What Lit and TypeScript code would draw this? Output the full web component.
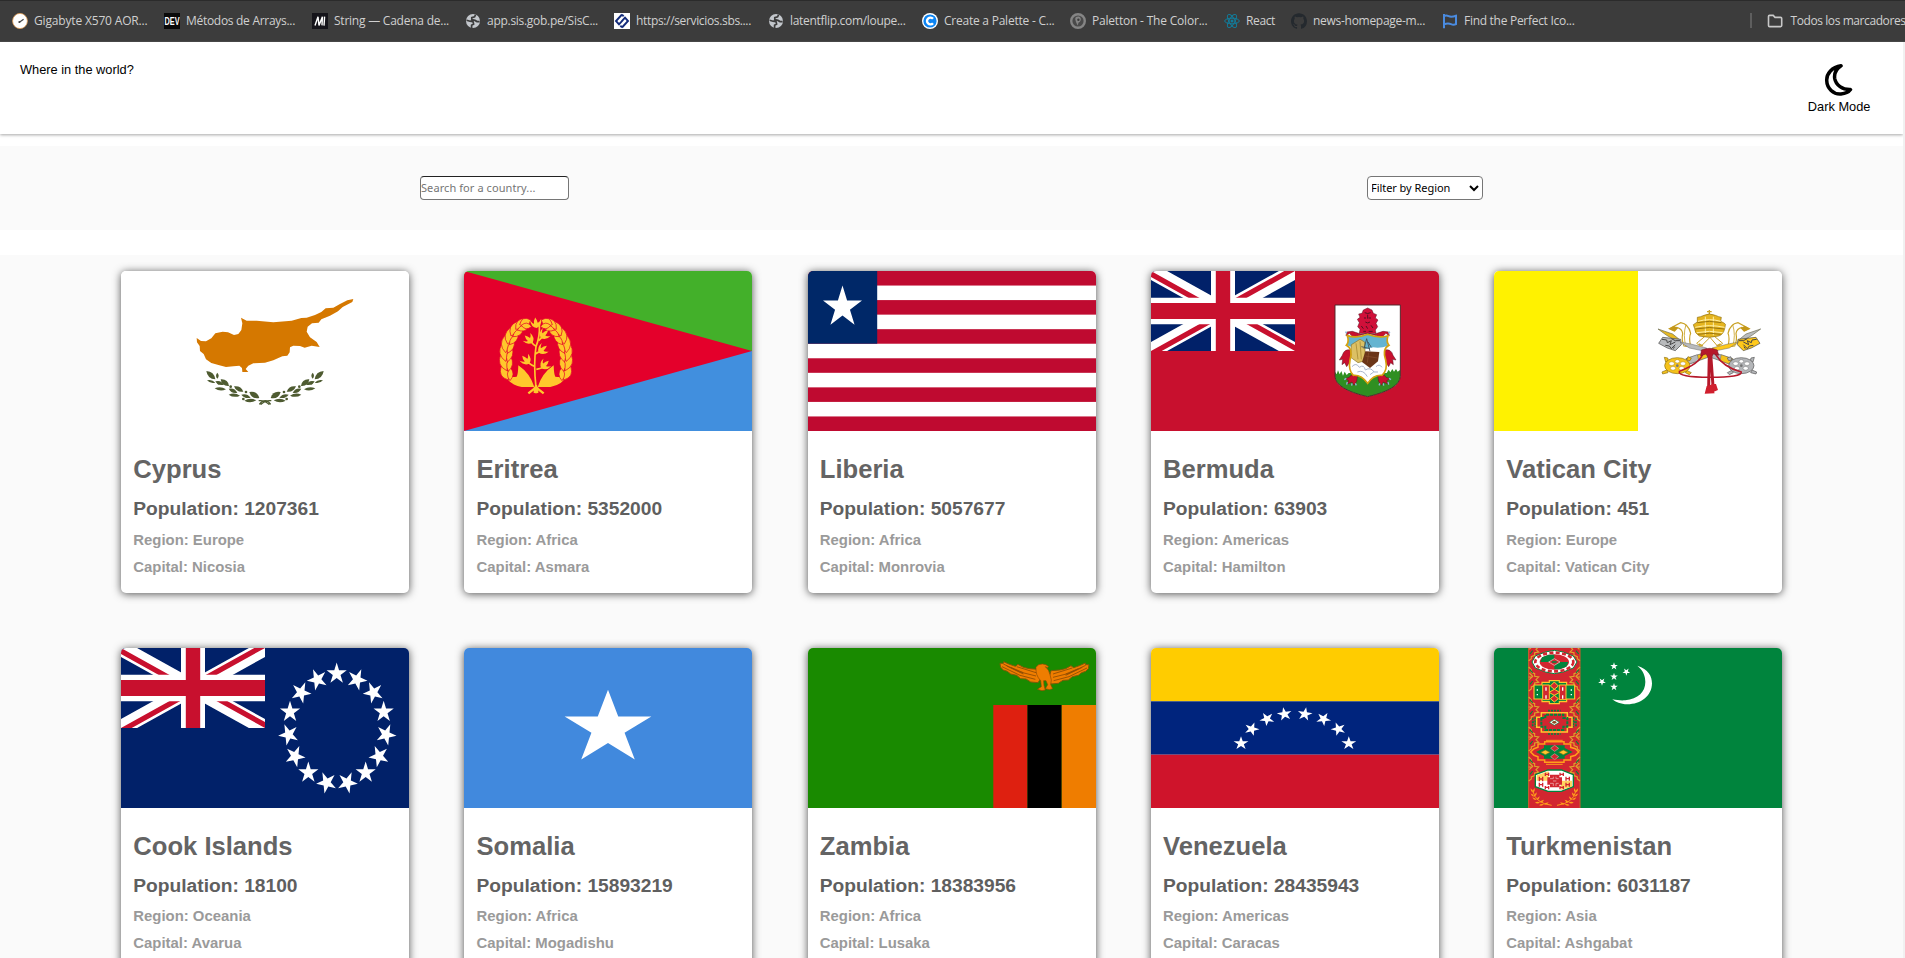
import { LitElement, html, svg, css } from "lit";
import { customElement, property } from "lit/decorators.js";

const star = (cx: number, cy: number, rx: number, ry: number, rot = 0, fill = "#fff") => {
  const pts: string[] = [];
  for (let i = 0; i < 10; i++) {
    const r = i % 2 ? 0.382 : 1;
    const a = ((i * 36 + rot - 90) * Math.PI) / 180;
    pts.push(`${(cx + rx * r * Math.cos(a)).toFixed(2)},${(cy + ry * r * Math.sin(a)).toFixed(2)}`);
  }
  return svg`<polygon points=${pts.join(" ")} fill=${fill} />`;
};

const leaf = (x: number, y: number, len: number, w: number, rot: number, fill: string) =>
  svg`<path d="M0 0Q${len * 0.5} ${-w} ${len} 0Q${len * 0.5} ${w} 0 0Z" transform="translate(${x} ${y}) rotate(${rot})" fill=${fill} />`;

const union = () => svg`
  <svg x="0" y="0" width="144" height="80" viewBox="0 0 60 30" preserveAspectRatio="none">
    <clipPath id="uj"><path d="M30 15h30v15zv15H0zH0V0zV0h30z" /></clipPath>
    <rect width="60" height="30" fill="#012169" />
    <path d="M0 0L60 30M60 0L0 30" stroke="#fff" stroke-width="6" />
    <path d="M0 0L60 30M60 0L0 30" clip-path="url(#uj)" stroke="#C8102E" stroke-width="4" />
    <path d="M30 0v30M0 15h60" stroke="#fff" stroke-width="10" />
    <path d="M30 0v30M0 15h60" stroke="#C8102E" stroke-width="6" />
  </svg>`;

const cyprusLeaves = [
  [346, 388, -27, -25, 15], [346, 398, -25, -7, 8], [352, 386, 0, -18, 8], [387, 408, -25, -20, 15],
  [372, 404, -26, -10, 11], [378, 418, -34, -3, 10], [430, 425, -28, -16, 13], [412, 428, -26, -12, 11],
  [420, 437, -34, -3, 10], [478, 444, -30, -18, 16], [452, 443, -28, -9, 10], [469, 451, -36, 1, 10],
];

const cyprus = () => svg`
  <rect width="288" height="160" fill="#fff" />
  <g transform="scale(.33333) translate(-63 -63)">
    <path fill="#D57800" d="M760 147L742 151L720 162L700 173L677 175L664 186L645 195L620 203L604 204L575 212L520 217L470 212L440 212L423 203L427 220L424 240L415 252L402 255L384 247L368 245L346 250L334 265L318 274L303 273L290 264L291 277L299 288L300 303L311 312L318 328L334 339L358 346L378 351L400 349L418 347L426 354L427 366L445 366L437 357L445 347L460 340L495 338L520 331L547 319L562 317L569 307L570 292L580 287L600 288L614 293L635 287L659 291L650 276L630 262L620 245L623 230L636 220L656 218L664 208L690 197L714 184L728 171L757 156Z" />
    ${cyprusLeaves.map(([x, y, dx, dy, w]) => {
      const len = Math.hypot(dx, dy);
      const a = (Math.atan2(dy, dx) * 180) / Math.PI;
      return svg`${leaf(x, y, len, w, a, "#4E5B31")}${leaf(990 - x, y, len, w, 180 - a, "#4E5B31")}`;
    })}
    <path d="M478 463Q486 452 496 452Q504 452 512 463M476 452Q495 450 508 464M514 452Q495 450 482 464" fill="none" stroke="#4E5B31" stroke-width="4" />
    ${[[392, 410], [438, 426], [356, 400], [430, 447]].map(([x, y]) => svg`<circle cx=${x} cy=${y} r="4" fill="#4E5B31" /><circle cx=${990 - x} cy=${y} r="4" fill="#4E5B31" />`)}
  </g>`;

const eritreaSide = () => svg`
  <path d="M253 411Q240 370 205 346Q204 375 200 380Q180 384 163 374Q178 404 215 411Z" />
  ${[[182, 378, -120, 46], [177, 350, -112, 52], [174, 322, -104, 54], [174, 296, -94, 52], [180, 270, -82, 50], [190, 246, -68, 48], [204, 226, -50, 44], [216, 212, -25, 36]].map(
    ([x, y, r, l]) => svg`<g stroke="#E4002B" stroke-width="2">${leaf(x - 7, y + 12, l, 24, r + 2, "#FFC72C")}${leaf(x - 2, y + 14, l * 0.85, 17, r + 32, "#FFC72C")}</g>`
  )}`;
const bud = (x: number, y: number, r: number) =>
  svg`<path d="M0 0Q-17 -6 -16 -26Q-10 -14 -6 -14Q-6 -24 0 -32Q5 -24 5 -15Q10 -15 17 -25Q17 -5 0 0Z" transform="translate(${x} ${y}) rotate(${r})" />`;

const eritrea = () => svg`
  <rect width="288" height="80" fill="#43B02A" />
  <rect y="80" width="288" height="80" fill="#418FDE" />
  <path d="M0 0L288 80L0 160Z" fill="#E4002B" />
  <g transform="scale(.33333) translate(-42 -63)" fill="#FFC72C">
    ${eritreaSide()}
    <g transform="translate(516 0) scale(-1 1)">${eritreaSide()}</g>
    <path d="M258 412Q250 340 258 290Q270 260 268 225M256 350Q244 346 235 338M259 358Q270 356 280 352M256 312Q264 306 272 305M260 290Q250 285 244 276M266 272Q272 266 278 260" fill="none" stroke="#FFC72C" stroke-width="5" />
    ${bud(238, 341, -42)}${bud(274, 355, 44)}${bud(266, 308, 50)}${bud(248, 278, -48)}${bud(272, 264, 44)}${bud(260, 234, -8)}
    <path d="M235 430L262 409M281 430L254 409M258 405V430" stroke="#FFC72C" stroke-width="7" />
    <path d="M251 412h14v17h-14z" />
  </g>`;

const liberia = () => svg`
  <rect width="288" height="160" fill="#fff" />
  ${[0, 2, 4, 6, 8, 10].map((i) => svg`<rect y=${(i * 160) / 11} width="288" height=${160 / 11} fill="#BF0A30" />`)}
  <rect width="69.2" height="72.7" fill="#002868" />
  ${star(34.5, 36.3, 20.5, 21.7)}`;

const bermudaHalf = () => svg`
  <path d="M683 250L640 262L628 250L618 258L620 246L637 244L662 252Z" fill="#C8102E" stroke="#5a1020" stroke-width="1.5" />
  <path d="M632 300Q612 296 607 316L598 330L608 328L606 344L614 338L620 350L632 332Z" fill="#C8102E" stroke="#5a1020" stroke-width="1.5" />
  <path d="M653 374Q634 370 628 382L616 386L626 392L622 402L636 396L642 406L650 394Z" fill="#C8102E" stroke="#5a1020" stroke-width="1.5" />
  <path d="M622 396l-2 8M636 400l-1 7M646 400l3 6M619 385l-6 4M621 250l-5 -5" stroke="#8fb7d8" stroke-width="4" />`;

const bermuda = () => svg`
  <rect width="288" height="160" fill="#C8102E" />
  ${union()}
  <g transform="scale(.33333) translate(-33 -63)">
    <path d="M585 165H781V380Q778 418 683 440Q588 418 585 380Z" fill="#fff" />
    <path d="M585 365l5 8 4-12 5 12 5-10 5 14 5-12 6 10 6-6H740l6-10 5 8 6-10 5 8 6-8 5 8 8-6V380Q778 418 683 440Q588 418 585 380Z" fill="#2F8F22" />
    <path d="M585 165H781V380Q778 418 683 440Q588 418 585 380Z" fill="none" stroke="#53282c" stroke-width="3" />
    <path d="M683 174L696 180L700 190L710 194L706 204L714 210L708 220L713 230L706 240L708 250H658L660 238L653 230L658 218L652 208L660 202L656 192L666 190L670 180Z" fill="#D0103A" stroke="#5a1020" stroke-width="1.5" />
    <path d="M674 188q9 5 18 0M672 204h6m8 0h7M676 216q7 6 14 0M664 228l6 8m8 -8l5 8m10 -10l6 8M670 244h8m8 0h12M683 194v12" stroke="#521020" stroke-width="3" fill="none" />
    ${bermudaHalf()}
    <g transform="translate(1366 0) scale(-1 1)">${bermudaHalf()}</g>
    <path d="M622 257Q650 266 683 253Q718 266 744 257Q738 276 747 286Q726 296 737 330Q744 360 726 376Q700 374 683 400Q664 374 640 376Q624 360 630 330Q640 296 619 286Q628 276 622 257Z" fill="#fff" />
    <path d="M622 257Q650 266 683 253Q718 266 744 257Q738 276 745 287Q720 296 700 292L664 300L634 290L619 286Q628 276 622 257Z" fill="#64B4D1" />
    <path d="M634 284L660 268L674 276L676 332L654 338L632 322Z" fill="#DCC064" stroke="#8b7427" stroke-width="2" />
    <path d="M648 280l6 48M660 274l4 54" stroke="#a88a34" stroke-width="2.5" />
    <path d="M672 296l8 -30l10 38M664 290l26 6M684 276l10 16" stroke="#3c4a55" stroke-width="2.5" fill="none" />
    <path d="M676 304L718 306L714 334L690 354L666 336Z" fill="#6B3518" />
    <path d="M676 318l36 6M686 308l-4 30" stroke="#8a5230" stroke-width="2" />
    <path d="M636 350q12 -14 22 2q14 -10 18 8q16 -10 26 6M652 366q18 -8 30 14M690 374q10 -12 24 -8M708 350q10 -10 18 2" fill="none" stroke="#a9b5cc" stroke-width="3" />
    <path d="M622 257Q650 266 683 253Q718 266 744 257Q738 276 747 286Q726 296 737 330Q744 360 726 376Q700 374 683 400Q664 374 640 376Q624 360 630 330Q640 296 619 286Q628 276 622 257Z" fill="none" stroke="#D5A10E" stroke-width="5" />
  </g>`;

const vatSide = (a: string, b: string) => svg`
  <path d="M534 237L578 252L600 270L590 274L560 256Z" fill=${b} stroke="#6b6b50" stroke-width="2" />
  <path d="M568 236L602 218Q626 222 632 250Q626 262 632 290L612 288Q604 270 608 250Q606 236 590 232L582 242Z" fill="#fff" stroke="#C9A227" stroke-width="3.5" />
  <path d="M566 236l16 -9l12 8l-10 10z" fill="#C4981A" />
  <path d="M618 224Q608 255 618 290" stroke="#C9A227" stroke-width="2.5" fill="none" />
  <path d="M548 262L602 268L604 284L586 302L562 294L536 280Z" fill=${a} stroke="#444" stroke-width="2" />
  <path d="M546 268l14 2l2 8l12 -6l-4 12l16 -8M556 286l12 2l6 8l12 -12M574 266l12 6l14 0M584 290l-4 6" stroke="#444" stroke-width="3" fill="none" />
  <path d="M600 276L632 282L680 294L676 304L628 294Z" fill=${a} stroke="#666" stroke-width="1.5" />`;
const vatBow = (a: string, b: string, edge: string) => svg`
  <path d="M680 306L618 326L628 342L684 322Z" fill=${a} stroke="#555" stroke-width="2" />
  <path d="M652 314L618 326L628 342L656 332Z" fill=${b} stroke="#666" stroke-width="1.5" />
  <g stroke=${edge} stroke-width="2" fill=${a}>
    <path d="M553 322l10 2l2 8l-8 4zM546 366l14 -6l4 8l-16 4zM624 320l10 4l-4 8l-10 -2zM622 362l12 6l-6 6l-12 -6z" />
    <ellipse cx="592" cy="347" rx="38" ry="24" />
  </g>
  <g fill="#fff" stroke=${edge} stroke-width="1">
    <ellipse cx="575" cy="341" rx="8" ry="5.5" /><ellipse cx="592" cy="334" rx="7" ry="5" /><ellipse cx="609" cy="341" rx="8" ry="5.5" />
    <ellipse cx="579" cy="355" rx="8" ry="5.5" /><ellipse cx="605" cy="355" rx="8" ry="5.5" />
  </g>
  <circle cx="592" cy="347" r="4" fill="#777" />`;

const vatican = () => svg`
  <rect width="288" height="160" fill="#fff" />
  <rect width="144" height="160" fill="#FFF200" />
  <g transform="scale(.33333) translate(-42 -63)">
    ${vatSide("#B9BBBD", "#E6B822")}
    <g transform="translate(1376 0) scale(-1 1)">${vatSide("#FFC91A", "#B9BBBD")}</g>
    <path d="M676 258L650 280L662 290L690 262L714 290L728 280L702 258Z" fill="#fff" stroke="#C9A227" stroke-width="3" />
    <path d="M656 282l12 6M722 282l-12 6" stroke="#C9A227" stroke-width="5" />
    ${vatBow("#F5C21B", "#B9BBBD", "#8a6d10")}
    <g transform="translate(1376 0) scale(-1 1)">${vatBow("#B4B6B9", "#F5C21B", "#555")}</g>
    <path d="M688 180v14M681 185h14" stroke="#C9A227" stroke-width="4" />
    <path d="M652 202L662 200L672 196Q688 188 706 196L716 200L724 202L722 214Q740 222 736 226L734 236Q730 254 716 258Q688 266 658 258Q644 250 644 236L640 224L652 216Z" fill="#E5B520" stroke="#8f6f10" stroke-width="2" />
    <path d="M654 214Q688 204 722 214M646 232Q688 222 734 232M650 248Q688 240 728 248M676 200v56M700 200v56" fill="none" stroke="#fff0a8" stroke-width="3" />
    <path d="M652 218Q688 210 724 218M646 237Q688 228 732 237M654 253Q688 246 722 253" fill="none" stroke="#97720c" stroke-width="3" />
    <path d="M668 312Q660 340 598 364Q592 382 690 382Q786 382 784 366Q730 352 706 312" fill="none" stroke="#B5182A" stroke-width="4.5" />
    <path d="M664 300Q690 290 712 300L716 316L700 312L694 322L684 322L678 312L662 318Z" fill="#B5182A" stroke="#6d1020" stroke-width="1.5" />
    <path d="M688 310L686 412M692 312L699 408" stroke="#B5182A" stroke-width="9" />
    <path d="M694 402L708 402L714 420L700 426ZM680 408L694 404L704 430L674 431Z" fill="#D01F2E" />
  </g>`;

const cookStars = [[710, 128], [771, 146], [820, 185], [851, 243], [858, 311], [837, 376], [797, 425], [742, 455], [680, 455], [625, 425], [585, 376], [566, 311], [570, 243], [603, 185], [652, 146]];
const cook = () => svg`
  <rect width="288" height="160" fill="#012169" />
  ${union()}
  ${cookStars.map(([x, y], i) => star((x - 63) / 3, (y - 53) / 3 + 0.6, 10.6, 11.2, i * 24))}`;

const somalia = () => svg`
  <rect width="288" height="160" fill="#4189DD" />
  ${star(144, 80.3, 45.6, 38.5)}`;

const zambiaWing = () => svg`
  <path d="M744 118L718 116L700 112L684 103L676 109L656 102L641 95L640 100L630 100L632 112L640 120L652 124L662 132L680 136L692 146L708 147L722 156L744 158L752 146Z" fill="#EF7D00" stroke="#7d5a08" stroke-width="3" />
  <path d="M640 102L690 126L738 138M636 110L690 136L736 148M680 110L738 128M662 112L700 128M650 108L700 132" fill="none" stroke="#8a4a04" stroke-width="2.5" />`;
const zambia = () => svg`
  <rect width="288" height="160" fill="#198A00" />
  <rect x="185.3" y="57" width="34.2" height="103" fill="#DE2010" />
  <rect x="219.5" y="57" width="34.2" height="103" fill="#000" />
  <rect x="253.7" y="57" width="34.3" height="103" fill="#EF7D00" />
  <g transform="scale(.33333) translate(-54 -54)">
    ${zambiaWing()}
    <g transform="translate(1527 4) scale(-1 1)">${zambiaWing()}</g>
    <path d="M738 112Q744 101 758 102L768 104L776 110L772 113L766 110Q778 120 780 134L784 150L782 164L788 176L778 179L766 176L773 164L768 152L761 152L762 166L766 180L756 182L742 178L754 170L752 152Q736 136 738 112Z" fill="#EF7D00" stroke="#8a4a04" stroke-width="2" />
  </g>`;

const venezuela = () => svg`
  <rect width="288" height="53.3" fill="#FFCC00" />
  <rect y="53.3" width="288" height="53.4" fill="#00247D" />
  <rect y="106.7" width="288" height="53.3" fill="#CF142B" />
  ${[[90, 95.3], [100.7, 81], [116, 71], [133.5, 66.2], [153.8, 66.2], [172.5, 71], [187.4, 81], [197.8, 95.3]].map(([x, y], i) => star(x, y, 7.8, 7, -72 + i * 20.57))}`;

const turkmenistan = () => svg`
  <rect width="288" height="160" fill="#00843D" />
  <g transform="scale(.33333) translate(-42 -54)">
    <rect x="144" y="54" width="157" height="480" fill="#D22630" />
    <path d="M146 54v480M300 54v480" stroke="#b8862c" stroke-width="2" />
    ${[50, 141, 231, 321, 411].map((y) => [0, 1].map((f) => svg`
      <g transform=${f ? "translate(446 0) scale(-1 1)" : ""} fill="none" stroke="#DDA52B" stroke-width="3.5">
        <path d="M146 ${y - 30}l8 8v8l10 4v8l12 2l-8 8l8 8l-12 2v8l-10 4v6l-8 6M148 ${y - 12}l10 10l-10 10M146 ${y}h12" />
        <path d="M150 ${y - 22}l8 10M150 ${y + 22}l8 -10" stroke="#00843D" />
      </g>`))}
    <path d="M156 96L166 78L196 66L223 61L250 66L280 78L291 96L280 114L250 126L223 131L196 126L166 114Z" fill="#fff" stroke="#00843D" stroke-width="3" />
    <ellipse cx="223" cy="96" rx="57" ry="28" fill="none" stroke="#D22630" stroke-width="8" stroke-dasharray="12 7" />
    <ellipse cx="223" cy="96" rx="44" ry="23" fill="#D22630" />
    <path d="M186 82l20 -8h17v22h-42zM223 96h42l-6 14l-20 8h-16z" fill="#00843D" />
    <path d="M206 96l17 -10l17 10l-17 10z" fill="#D22630" stroke="#f3d3d3" stroke-width="2" />
    <path d="M216 96h14" stroke="#00843D" stroke-width="4" />

    <path d="M162 165h24v-8h22v-5h30v5h22v8h24v42h-24v8h-22v6h-30v-6h-22v-8h-24z" fill="#00843D" stroke="#FFC72C" stroke-width="3.5" />
    <path d="M188 165h20v44h-20zM238 165h20v44h-20z" fill="#D22630" stroke="#FFC72C" stroke-width="3" />
    <path d="M198 172v10M248 172v10M198 196v10M248 196v10M172 178v4M274 178v4M172 192v4M274 192v4" stroke="#fff" stroke-width="4" />
    <path d="M223 156l12 12l-12 10l-12 -10zM223 196l12 10l-12 10l-12 -10zM207 187l16 -9l16 9l-16 9z" fill="#D22630" stroke="#FFC72C" stroke-width="3" />

    <path d="M158 265v26M166 262v30M280 262v30M288 265v26M204 242h38M204 312h38M156 276h18M272 276h18" stroke="#00843D" stroke-width="5" stroke-dasharray="6 3" />
    <path d="M170 262h14v-14h78v14h14v30h-14v14h-78v-14h-14z" fill="#D22630" stroke="#FFC72C" stroke-width="4.5" />
    <path d="M184 264h12v-10h54v10h12v26h-12v10h-54v-10h-12z" fill="none" stroke="#00843D" stroke-width="6" stroke-dasharray="9 3" />
    <path d="M208 277l15 -9l15 9l-15 9z" fill="#fff" stroke="#00843D" stroke-width="2" />
    <ellipse cx="223" cy="277" rx="6" ry="4" fill="#8c4a1c" />

    <path d="M152 366l10 -10l12 -4v-10h20v-7h58v7h20v10l14 4l10 10l-10 10l-14 4v10h-20v7h-58v-7h-20v-10l-12 -4z" fill="#D22630" stroke="#FF9E1B" stroke-width="4.5" />
    <path d="M168 366l24 -12v-8h62v8l24 12l-24 12v8h-62v-8z" fill="#00843D" />
    <path d="M212 355l12 -9l12 9l-12 9zM212 380l12 -9l12 9l-12 9z" fill="#D22630" stroke="#d99" stroke-width="2" />
    <path d="M182 367l14 -7l14 7l-14 7zM236 367l14 -7l14 7l-14 7z" fill="#FFC72C" stroke="#7d6a1a" stroke-width="2" />
    <path d="M198 331h50M198 403h50" stroke="#FF9E1B" stroke-width="3" />

    <path d="M166 434L204 420H244L280 434V470L244 484H204L166 470Z" fill="#fff" stroke="#00843D" stroke-width="4" />
    <path d="M170 436l36 -12v28h-36zM242 452h34v18l-34 10z" fill="#FFC72C" opacity=".75" />
    <path d="M178 440v14M188 440v14M178 447h10M178 458v12M188 458v12M178 464h10M258 440v12M268 440v12M258 446h10M258 458v12M268 458v12M258 464h10M196 428v10M206 428v10M196 433h10M240 428v10M250 428v10M240 433h10M196 468v10M206 468v10M196 472h10M240 468v10M250 468v10M240 472h10" stroke="#D22630" stroke-width="4" />
    <path d="M202 442h8v-8h28v8h8v22h-8v8h-28v-8h-8z" fill="#D22630" />
    <path d="M210 446h10v-6M236 446h-8v-6M210 460h10v8M236 460h-8v8M219 453h10" stroke="#f0c8c8" stroke-width="2" fill="none" />
    ${[0, 1].map((f) => svg`<g transform=${f ? "translate(446 0) scale(-1 1)" : ""}>
      <path d="M158 482Q166 520 215 526" fill="none" stroke="#FF9E1B" stroke-width="3" />
      ${[[159, 488, -70], [163, 500, -60], [170, 510, -50], [180, 518, -35], [192, 523, -20], [159, 488, -120], [163, 500, -140], [170, 510, -150], [180, 518, 180], [192, 523, 170]].map(([x, y, r]) => leaf(x, y, 15, 5, r, "#FF9E1B"))}
    </g>`)}
    <path d="M472 107C505 118 516 138 516 160C516 198 482 223 442 223C422 223 407 216 397 208C412 211 424 212 436 211C474 207 496 186 496 156C496 136 488 120 472 107Z" fill="#fff" />
    ${star(402, 109, 12, 12, 0)}${star(439, 125, 12, 12, 36)}${star(402, 140, 12, 12, 0)}${star(366, 155, 12, 12, 36)}${star(402, 171, 12, 12, 0)}
  </g>`;

type Country = { name: string; population: number; region: string; capital: string; flag: () => unknown };
const countries: Country[] = [
  { name: "Cyprus", population: 1207361, region: "Europe", capital: "Nicosia", flag: cyprus },
  { name: "Eritrea", population: 5352000, region: "Africa", capital: "Asmara", flag: eritrea },
  { name: "Liberia", population: 5057677, region: "Africa", capital: "Monrovia", flag: liberia },
  { name: "Bermuda", population: 63903, region: "Americas", capital: "Hamilton", flag: bermuda },
  { name: "Vatican City", population: 451, region: "Europe", capital: "Vatican City", flag: vatican },
  { name: "Cook Islands", population: 18100, region: "Oceania", capital: "Avarua", flag: cook },
  { name: "Somalia", population: 15893219, region: "Africa", capital: "Mogadishu", flag: somalia },
  { name: "Zambia", population: 18383956, region: "Africa", capital: "Lusaka", flag: zambia },
  { name: "Venezuela", population: 28435943, region: "Americas", capital: "Caracas", flag: venezuela },
  { name: "Turkmenistan", population: 6031187, region: "Asia", capital: "Ashgabat", flag: turkmenistan },
];

@customElement("country-card")
class CountryCard extends LitElement {
  @property({ attribute: false }) country!: Country;
  static styles = css`
    :host { display: block; width: 288px; height: 322px; border-radius: 5px; background: #fff; overflow: hidden; box-shadow: 0 1px 8px rgba(0, 0, 0, 0.68); }
    .flag { display: block; width: 288px; height: 160px; }
    .body { padding: 23px 12.3px 0; font-family: Arial, "Liberation Sans", sans-serif; font-weight: 700; }
    h2, h3, p { margin: 0; font-weight: 700; white-space: nowrap; }
    h2 { font-size: 25.6px; line-height: 30px; color: #646464; }
    h3 { font-size: 19.2px; line-height: 22px; color: #5f5f5f; margin-top: 14px; }
    p { font-size: 14.9px; line-height: 17px; color: #9a9a9a; margin-top: 11.6px; }
    p + p { margin-top: 10px; }
  `;
  render() {
    const c = this.country;
    return html`
      <svg class="flag" viewBox="0 0 288 160">${c.flag()}</svg>
      <div class="body">
        <h2>${c.name}</h2>
        <h3>Population: ${c.population}</h3>
        <p>Region: ${c.region}</p>
        <p>Capital: ${c.capital}</p>
      </div>`;
  }
}

const globe = svg`<circle cx="8" cy="8" r="7" fill="#C3C7CC" /><path d="M1.6 7.2L5 8.2L8 8.6L8.6 11L6.6 12.2V15M10.6 1.6L9.6 3.8L6.8 4.6V6.6L10 7.4L12 8.6L14.6 8.6" fill="none" stroke="#3c3c3c" stroke-width="1.7" />`;
const icons: Record<string, unknown> = {
  gauge: svg`<ellipse cx="8" cy="8" rx="7.4" ry="7.6" fill="#fff" stroke="#E5A25A" stroke-width=".8" /><path d="M7 9.6L11.6 6.2" stroke="#444" stroke-width="1.2" /><circle cx="7.4" cy="9" r="1" fill="#444" />`,
  dev: svg`<rect width="16" height="16" fill="#0A0A0A" /><text x="8" y="11.6" text-anchor="middle" textLength="15" lengthAdjust="spacingAndGlyphs" font-family="Liberation Sans, sans-serif" font-weight="700" font-size="10" fill="#fff">DEV</text>`,
  mdn: svg`<rect width="16" height="16" fill="#15141A" /><path d="M3 12.6L6 3.8L7 12.4L10.4 3.8L10 12.4M12.6 3.6L12 12.6" fill="none" stroke="#fff" stroke-width="1.4" />`,
  globe,
  sbs: svg`<rect width="16" height="16" fill="#fff" /><path d="M8 1.5L2 8L5 11.4L8.6 7.4M8 14.5L14 8L11 4.6L7.4 8.6M8 1.5L9.6 3.4M8 14.5L6.4 12.6" fill="none" stroke="#132B7A" stroke-width="1.9" />`,
  coolors: svg`<circle cx="8" cy="8" r="8" fill="#fff" /><circle cx="8" cy="8" r="6.6" fill="#0B84F3" /><path d="M11 5.8A3.4 3.4 0 1 0 11 10.2" fill="none" stroke="#fff" stroke-width="2.4" />`,
  paletton: svg`<circle cx="8" cy="8" r="6.8" fill="#4a4a4a" stroke="#858585" stroke-width="2.4" /><path d="M5.2 6Q5.4 3.6 8.4 3.6Q11 4 10.8 7Q10 9.6 8.6 9.4L7.6 12.4L6 9Z" fill="#858585" /><circle cx="8.4" cy="6.8" r="1.2" fill="#3c3c3c" />`,
  react: svg`<g fill="none" stroke="#127C9B" stroke-width="1"><ellipse cx="8" cy="8" rx="7.3" ry="2.8" /><ellipse cx="8" cy="8" rx="7.3" ry="2.8" transform="rotate(60 8 8)" /><ellipse cx="8" cy="8" rx="7.3" ry="2.8" transform="rotate(120 8 8)" /></g><circle cx="8" cy="8" r="1.5" fill="#127C9B" />`,
  github: svg`<path fill="#24292E" d="M8 .2C3.58.2 0 3.78 0 8.2c0 3.54 2.29 6.53 5.47 7.59.4.07.55-.17.55-.38v-1.49c-2.01.37-2.53-.49-2.69-.94-.09-.23-.48-.94-.82-1.13-.28-.15-.68-.52-.01-.53.63-.01 1.08.58 1.23.82.72 1.21 1.87.87 2.33.66.07-.52.28-.87.51-1.07-1.78-.2-3.64-.89-3.64-3.95 0-.87.31-1.59.82-2.15-.08-.2-.36-1.02.08-2.12 0 0 .67-.21 2.2.82a7.6 7.6 0 0 1 4 0c1.53-1.04 2.2-.82 2.2-.82.44 1.1.16 1.92.08 2.12.51.56.82 1.27.82 2.15 0 3.07-1.87 3.75-3.65 3.95.29.25.54.73.54 1.48v2.2c0 .21.15.46.55.38A8.01 8.01 0 0 0 16 8.2C16 3.78 12.42.2 8 .2z" />`,
  flag: svg`<path d="M2 1V15.2M2 3.2Q4 2 6.6 3.2T14 2.8V11.2Q11.6 12.4 9 11.2T2 11.2" fill="none" stroke="#4A8BE0" stroke-width="2" />`,
  folder: svg`<path d="M1.5 3.4Q1.5 2.4 2.5 2.4H6.2L8 4.4H13.5Q14.7 4.4 14.7 5.5V12.6Q14.7 13.6 13.6 13.6H2.6Q1.5 13.6 1.5 12.5Z" fill="none" stroke="#C8C8C8" stroke-width="1.6" />`,
};

type Bookmark = { icon: string; label: string; slot: number; text: number };
const bookmarks: Bookmark[] = [
  { icon: "gauge", label: "Gigabyte X570 AOR...", slot: 152, text: 113.5 },
  { icon: "dev", label: "Métodos de Arrays...", slot: 148, text: 109 },
  { icon: "mdn", label: "String — Cadena de...", slot: 153, text: 115 },
  { icon: "globe", label: "app.sis.gob.pe/SisC...", slot: 149, text: 111 },
  { icon: "sbs", label: "https://servicios.sbs....", slot: 154, text: 115 },
  { icon: "globe", label: "latentflip.com/loupe...", slot: 154, text: 115.5 },
  { icon: "coolors", label: "Create a Palette - C...", slot: 148, text: 110.5 },
  { icon: "paletton", label: "Paletton - The Color...", slot: 154, text: 115.5 },
  { icon: "react", label: "React", slot: 67, text: 29 },
  { icon: "github", label: "news-homepage-m...", slot: 151, text: 112 },
  { icon: "flag", label: "Find the Perfect Ico...", slot: 150, text: 110.5 },
];

@customElement("bookmarks-bar")
class BookmarksBar extends LitElement {
  static styles = css`
    :host { display: flex; align-items: center; box-sizing: border-box; height: 42px; padding-left: 12px; background: #3c3c3c; border-bottom: 1px solid #474747; box-shadow: inset 0 1px 0 #2b2b2b; overflow: hidden; color: #d0d0d0; font: 12px/18px "Open Sans", "Noto Sans", sans-serif; }
    .item { display: flex; align-items: center; gap: 6px; flex: none; white-space: nowrap; }
    .icon { width: 16px; height: 16px; flex: none; }
    .rest { display: flex; align-items: center; margin-left: auto; flex: none; }
    .sep { width: 2px; height: 15px; margin-right: 15px; background: #5e5e5e; }
    .all { width: 138.5px; gap: 8px; }
  `;
  firstUpdated() {
    this.renderRoot.querySelectorAll<HTMLElement>("[data-width]").forEach((el) => {
      const n = el.textContent!.length;
      el.style.letterSpacing = `${(Number(el.dataset.width) - el.getBoundingClientRect().width) / n}px`;
    });
  }
  icon(name: string) {
    return html`<svg class="icon" viewBox="0 0 16 16">${icons[name]}</svg>`;
  }
  render() {
    return html`
      ${bookmarks.map((b) => html`<div class="item" style="width:${b.slot}px">${this.icon(b.icon)}<span data-width=${b.text}>${b.label}</span></div>`)}
      <div class="rest"><span class="sep"></span><div class="item all">${this.icon("folder")}<span data-width="115">Todos los marcadores</span></div></div>`;
  }
}

@customElement("app-root")
class AppRoot extends LitElement {
  static styles = css`
    :host { display: block; width: 1905px; height: 958px; overflow: hidden; background: #fff; font-family: Arial, "Liberation Sans", sans-serif; }
    .viewport { display: flex; height: 916px; }
    .page { width: 1903px; flex: none; overflow: hidden; }
    .track { flex: 1; background: #f1f1f1; }
    header { display: flex; justify-content: space-between; box-sizing: border-box; height: 92px; padding: 20px 32.6px 0 20px; box-shadow: 0 1px 3px rgba(0, 0, 0, 0.35); font-size: 12.8px; line-height: 15px; }
    .mode { display: flex; flex-direction: column; align-items: center; padding-top: 1px; gap: 3px; }
    .moon { width: 32px; height: 33px; }
    .filters { display: flex; justify-content: space-between; align-items: center; box-sizing: border-box; height: 84px; margin-top: 12px; padding: 0 420px; background: #fafafa; }
    input, select { box-sizing: border-box; height: 24px; font-family: "Noto Sans", "Open Sans", sans-serif; font-size: 11px; border-radius: 4px; background: #fff; }
    input { width: 149px; padding: 0 0 2px; border: 1px solid #767676; border-top: 1.5px solid #222; letter-spacing: 0.08px; }
    input::placeholder { color: #757575; }
    select { width: 116px; border: 1px solid #767676; padding: 0 0 1px; color: #000; letter-spacing: -0.05px; text-indent: -1px; }
    main { display: grid; grid-template-columns: repeat(5, 288px); justify-content: space-between; row-gap: 54.8px; margin-top: 25px; padding: 16px 121px 0; background: #fafafa; }
  `;
  render() {
    return html`
      <bookmarks-bar></bookmarks-bar>
      <div class="viewport">
        <div class="page">
          <header>
            <span>Where in the world?</span>
            <div class="mode">
              <svg class="moon" viewBox="0 0 32 33"><path d="M18 2.8C9 4 3.6 10.5 3.7 17.2C3.9 25.5 10.5 31.6 18 31C22.5 30.7 26 28.7 27.5 26.6C19.5 27 12.8 22 11.7 15.5C11 10.5 13.5 5.8 18 2.8Z" fill="#fff" stroke="#000" stroke-width="3.5" stroke-linejoin="round" /></svg>
              <span>Dark Mode</span>
            </div>
          </header>
          <section class="filters">
            <input type="text" placeholder="Search for a country..." />
            <select><option>Filter by Region</option></select>
          </section>
          <main>${countries.map((c) => html`<country-card .country=${c}></country-card>`)}</main>
        </div>
        <div class="track"></div>
      </div>`;
  }
}
